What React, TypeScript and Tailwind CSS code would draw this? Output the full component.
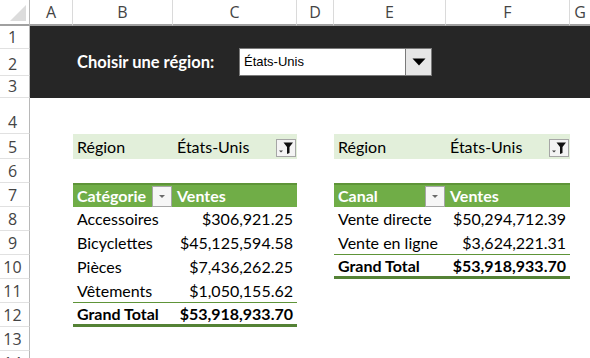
import React from "react";

const FONT = { fontFamily: "Lato, 'Liberation Sans', sans-serif" };
const HDR = { fontFamily: "'Open Sans', 'Noto Sans', sans-serif" };

function FilterBtn() {
  return (
    <div className="w-[20px] h-[18px] border border-[#a6a6a6] bg-[#f4f4f4] flex items-center justify-center">
      <svg width="18" height="16" viewBox="0 0 18 16">
        <path d="M2 10.5 H6 L4 12.5 Z" fill="#404040" />
        <path d="M6.5 2.5 H16 L12.5 7 V13 L10 14 V7 Z" fill="#111" />
      </svg>
    </div>
  );
}

function HeadBtn() {
  return (
    <div className="w-[20px] h-[21px] border border-[#a6a6a6] bg-[#f6f6f6] flex items-center justify-center">
      <svg width="18" height="19" viewBox="0 0 18 19">
        <path d="M6 8 H12 L9 11 Z" fill="#6a6a6a" />
      </svg>
    </div>
  );
}

const letters = ["A", "B", "C", "D", "E", "F", "G"];
const colStarts = [
  "col-start-2",
  "col-start-3",
  "col-start-4",
  "col-start-5",
  "col-start-6",
  "col-start-7",
  "col-start-8",
];
const rowStarts = [
  "row-start-2",
  "row-start-3",
  "row-start-4",
  "row-start-5",
  "row-start-6",
  "row-start-7",
  "row-start-8",
  "row-start-9",
  "row-start-10",
  "row-start-11",
  "row-start-12",
  "row-start-13",
  "row-start-14",
  "row-start-15",
];

export default function App() {
  return (
    <div className="w-[590px] h-[358px] overflow-hidden bg-white text-black" style={FONT}>
      <div className="grid grid-cols-[30px_43px_100px_124px_37px_112px_124px_1fr] grid-rows-[26px_23px_27px_22px_36px_25px_24px_24px_24px_24px_24px_24px_24px_24px_24px]">
        {/* corner */}
        <div className="col-start-1 row-start-1 border-r border-b-2 border-r-[#b8b8b8] border-b-[#a0a0a0] flex items-end justify-end p-[3px]">
          <svg width="16" height="16" viewBox="0 0 16 16">
            <path d="M16 0 V16 H0 Z" fill="#dcdcdc" />
          </svg>
        </div>
        {/* column letters */}
        {letters.map((l, i) => (
          <div
            key={l}
            className={`${colStarts[i]} row-start-1 border-b-2 border-b-[#a0a0a0] ${i < 6 ? "border-r border-r-[#dadada]" : ""} flex items-center justify-center text-[16px] text-[#444]`}
            style={HDR}
          >
            {l}
          </div>
        ))}
        {/* row numbers */}
        {rowStarts.map((r, i) => (
          <div
            key={r}
            className={`col-start-1 ${r} border-r border-r-[#b8b8b8] border-b border-b-[#e1e1e1] flex items-end justify-center pr-[4px] pb-[1px] text-[16px] leading-[20px] text-[#444]`}
            style={HDR}
          >
            {i + 1}
          </div>
        ))}

        {/* dark band */}
        <div className="col-start-2 col-end-9 row-start-2 row-span-3 bg-[#262626] flex items-center pl-[47px]">
          <div className="w-[162px] text-white font-bold text-[16.5px]">Choisir une région:</div>
          <div className="flex h-[28px]">
            <div
              className="w-[166px] bg-white border border-[#7a7a7a] border-r-0 flex items-center pl-[4px] text-[13px] text-black"
              style={{ fontFamily: "'Liberation Sans', Arial, sans-serif" }}
            >
              États-Unis
            </div>
            <div className="w-[27px] bg-[#e6e6e6] border border-[#7a7a7a] flex items-center justify-center">
              <svg width="14" height="8" viewBox="0 0 14 8">
                <path d="M0.5 0.5 H13.5 L7 7.5 Z" fill="#000" />
              </svg>
            </div>
          </div>
        </div>

        {/* Left pivot: region filter row (excel row 5) */}
        <div className="col-start-3 col-span-2 row-start-6 bg-[#e2efda] flex items-center text-[16px]">
          <div className="w-[100px] pl-[4px]">Région</div>
          <div className="flex-1 pl-[4px]">États-Unis</div>
          <div className="mr-[1px] mt-[2px]">
            <FilterBtn />
          </div>
        </div>
        {/* Right pivot: region filter row */}
        <div className="col-start-6 col-span-2 row-start-6 bg-[#e2efda] flex items-center text-[16px]">
          <div className="w-[112px] pl-[4px]">Région</div>
          <div className="flex-1 pl-[4px]">États-Unis</div>
          <div className="mr-[1px] mt-[2px]">
            <FilterBtn />
          </div>
        </div>

        {/* Left pivot header (excel row 7) */}
        <div className="col-start-3 col-span-2 row-start-8 bg-[#70ad47] border-t-2 border-t-[#5e9438] flex items-center text-[16px] font-bold text-white">
          <div className="w-[100px] pl-[4px] flex items-center justify-between pr-[1px]">
            <span>Catégorie</span>
            <HeadBtn />
          </div>
          <div className="flex-1 pl-[4px]">Ventes</div>
        </div>
        {/* Right pivot header */}
        <div className="col-start-6 col-span-2 row-start-8 bg-[#70ad47] border-t-2 border-t-[#5e9438] flex items-center text-[16px] font-bold text-white">
          <div className="w-[112px] pl-[4px] flex items-center justify-between pr-[1px]">
            <span>Canal</span>
            <HeadBtn />
          </div>
          <div className="flex-1 pl-[4px]">Ventes</div>
        </div>

        {/* Left data */}
        <div className="col-start-3 col-span-2 row-start-9 flex items-center text-[16px]">
          <div className="w-[100px] pl-[4px]">Accessoires</div>
          <div className="flex-1 text-right pr-[4px]">$306,921.25</div>
        </div>
        <div className="col-start-3 col-span-2 row-start-10 flex items-center text-[16px]">
          <div className="w-[100px] pl-[4px]">Bicyclettes</div>
          <div className="flex-1 text-right pr-[4px]">$45,125,594.58</div>
        </div>
        <div className="col-start-3 col-span-2 row-start-11 flex items-center text-[16px]">
          <div className="w-[100px] pl-[4px]">Pièces</div>
          <div className="flex-1 text-right pr-[4px]">$7,436,262.25</div>
        </div>
        <div className="col-start-3 col-span-2 row-start-12 flex items-center text-[16px] border-b border-b-[#5e9438]">
          <div className="w-[100px] pl-[4px]">Vêtements</div>
          <div className="flex-1 text-right pr-[4px]">$1,050,155.62</div>
        </div>
        <div className="col-start-3 col-span-2 row-start-13 flex items-center text-[16px] font-bold border-b-[3px] border-b-[#548235]">
          <div className="w-[100px] pl-[4px]">Grand Total</div>
          <div className="flex-1 text-right pr-[4px]">$53,918,933.70</div>
        </div>

        {/* Right data */}
        <div className="col-start-6 col-span-2 row-start-9 flex items-center text-[16px]">
          <div className="w-[112px] pl-[4px]">Vente directe</div>
          <div className="flex-1 text-right pr-[4px]">$50,294,712.39</div>
        </div>
        <div className="col-start-6 col-span-2 row-start-10 flex items-center text-[16px] border-b border-b-[#5e9438]">
          <div className="w-[112px] pl-[4px]">Vente en ligne</div>
          <div className="flex-1 text-right pr-[4px]">$3,624,221.31</div>
        </div>
        <div className="col-start-6 col-span-2 row-start-11 flex items-center text-[16px] font-bold border-b-[3px] border-b-[#548235]">
          <div className="w-[112px] pl-[4px]">Grand Total</div>
          <div className="flex-1 text-right pr-[4px]">$53,918,933.70</div>
        </div>
      </div>
    </div>
  );
}
